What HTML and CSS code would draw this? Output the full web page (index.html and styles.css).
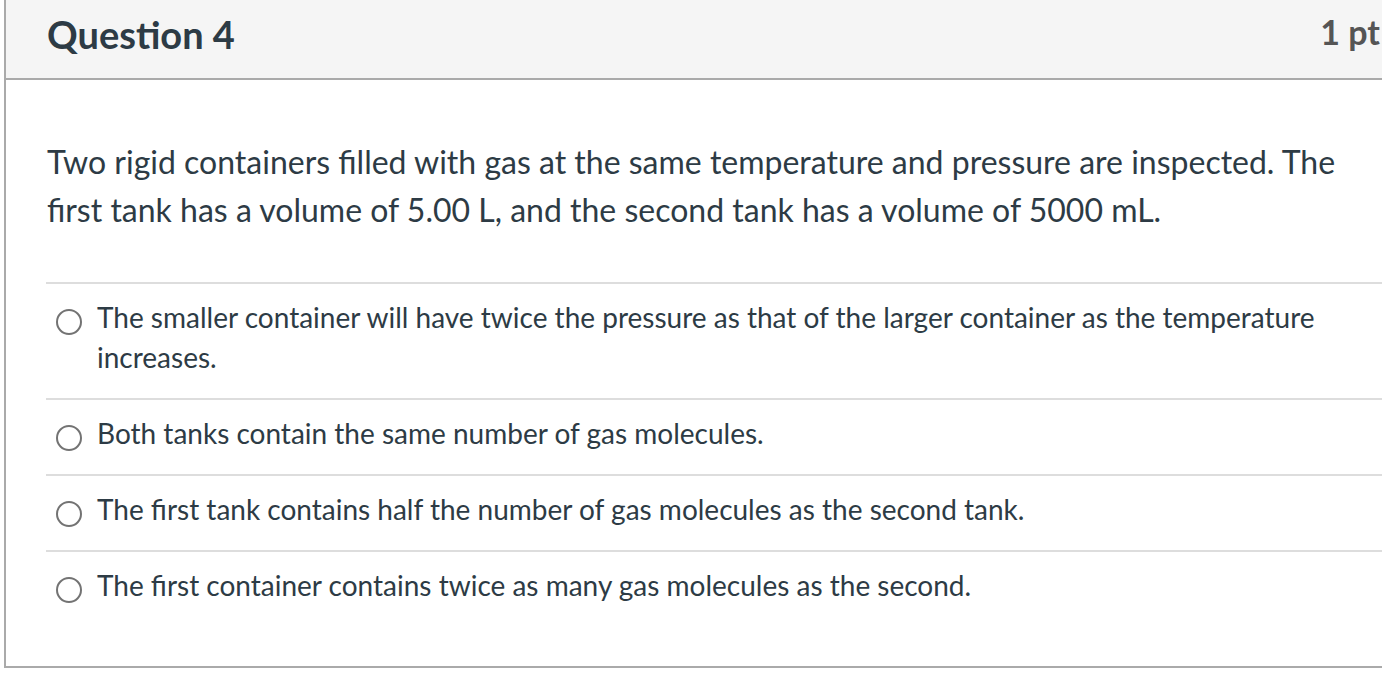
FILE: index.html
```html
<!DOCTYPE html>
<html>
<head>
<meta charset="utf-8">
<link rel="stylesheet" href="styles.css">
</head>
<body>
<div class="question">
  <div class="header">
    <h2 class="title">Question 4</h2>
    <div class="points">1 pt</div>
  </div>
  <div class="content">
    <p class="text">Two rigid containers filled with gas at the same temperature and pressure are inspected. The first tank has a volume of 5.00 L, and the second tank has a volume of 5000 mL.</p>
    <div class="answers">
      <div class="answer"><span class="radio"></span><span class="label">The smaller container will have twice the pressure as that of the larger container as the temperature increases.</span></div>
      <div class="answer"><span class="radio"></span><span class="label">Both tanks contain the same number of gas molecules.</span></div>
      <div class="answer"><span class="radio"></span><span class="label">The first tank contains half the number of gas molecules as the second tank.</span></div>
      <div class="answer"><span class="radio"></span><span class="label">The first container contains twice as many gas molecules as the second.</span></div>
    </div>
  </div>
</div>
</body>
</html>
```
FILE: styles.css
```css
html, body {
  margin: 0;
  padding: 0;
  background: #ffffff;
  overflow: hidden;
}
body {
  font-family: Lato, "Open Sans", sans-serif;
  color: #2d3b45;
}
.question {
  margin-left: 4px;
  width: 1420px;
  border-left: 2px solid #aaaaaa;
  border-right: 2px solid #aaaaaa;
  border-bottom: 2px solid #aaaaaa;
  box-sizing: border-box;
}
.header {
  height: 80px;
  box-sizing: border-box;
  background: #f5f5f5;
  border-bottom: 2px solid #aaaaaa;
  display: flex;
  align-items: flex-start;
  justify-content: space-between;
  padding: 0 42px 0 41px;
}
.title {
  margin: 15px 0 0 0;
  font-size: 38px;
  line-height: 38px;
  font-weight: 700;
  color: #2d3b45;
}
.points {
  margin-top: 15px;
  font-size: 34px;
  line-height: 34px;
  font-weight: 700;
  color: #555555;
}
.content {
  padding: 58px 0 40px 40px;
}
.text {
  margin: 0 57px 48px 1px;
  font-size: 32px;
  line-height: 48px;
}
.answers {
  border-top: 2px solid #dddddd;
}
.answer {
  display: flex;
  align-items: flex-start;
  padding: 13px 0 21px 10px;
  border-bottom: 2px solid #dddddd;
  font-size: 28px;
  line-height: 40px;
}
.answer:last-child {
  border-bottom: none;
}
.radio {
  flex: none;
  width: 22px;
  height: 22px;
  border: 2px solid #737373;
  border-radius: 50%;
  margin-top: 12px;
  margin-right: 15px;
}
.label {
  flex: 1;
  padding-right: 60px;
}
```
